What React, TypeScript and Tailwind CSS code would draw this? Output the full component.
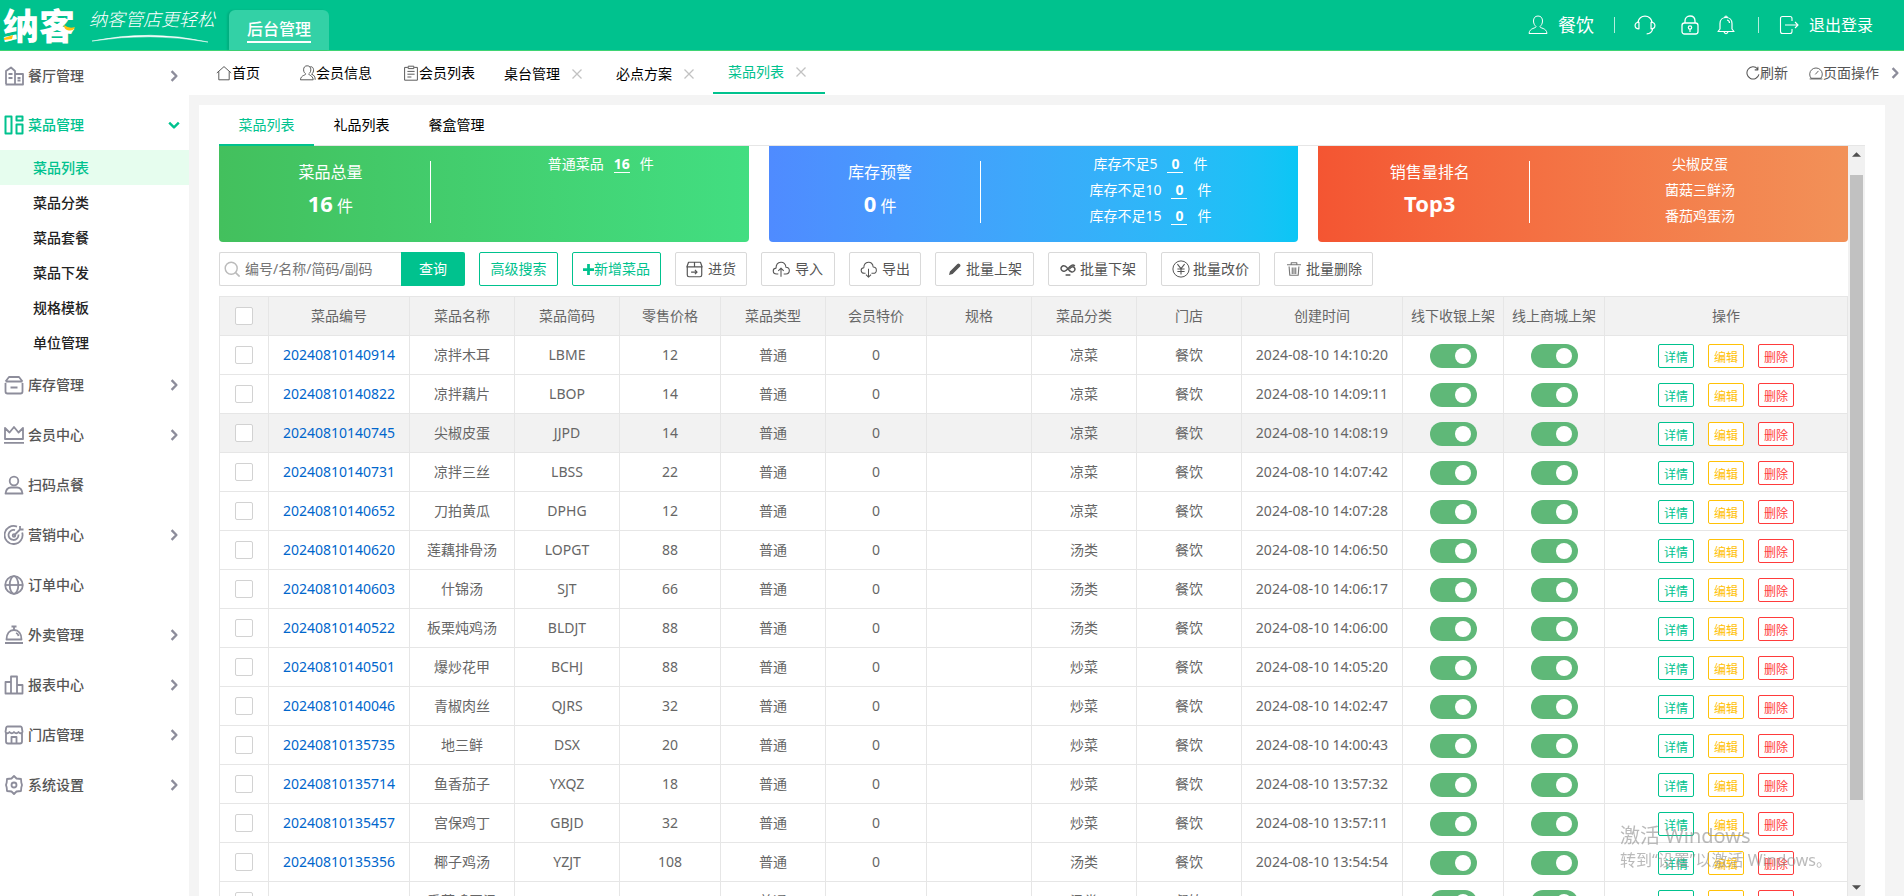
import React, { useState } from 'react';

interface IconProps {
  className?: string;
  children: React.ReactNode;
}

const Icon: React.FC<IconProps> = ({ className = 'size-5', children }) => (
  <svg viewBox="0 0 20 20" fill="none" stroke="currentColor" strokeWidth="1.8" strokeLinejoin="round" className={`shrink-0 ${className}`} aria-hidden="true">
    {children}
  </svg>
);

const MENU = [
  { name: '餐厅管理', arrow: true, icon: <><path d="M2 18V5l5-3.500L11 5v13M1.500 18.500h17.500V8h-8M4.500 8h4M4.500 12h4M13.500 12h3M13.500 14.500h3" /></> },
  {
    name: '菜品管理', arrow: true, icon: <><path d="M1.500 1.500h6v17h-6zM12.500 1.500h6v4h-6zM12.500 9.500h6v9h-6z" strokeWidth="2" /></>,
    children: ['菜品列表', '菜品分类', '菜品套餐', '菜品下发', '规格模板', '单位管理'],
  },
  { name: '库存管理', arrow: true, icon: <><path d="M1.500 6.500l3.500-4.500h10l3.500 4.500M1.500 8v8.500q0 2 2 2h13q2 0 2-2V8M1.500 6.500h17M6.500 12.500h7" /></> },
  { name: '会员中心', arrow: true, icon: <><path d="M1 3v11h18V3l-4.500 4.500L10 2 5.500 7.500zM0 17.800h20" /></> },
  { name: '扫码点餐', arrow: false, icon: <><circle cx="10" cy="6" r="4.300" /><path d="M1.500 18.500c.5-4 3-6 5.500-6h6c2.500 0 5 2 5.500 6z" /></> },
  { name: '营销中心', arrow: true, icon: <><path d="M18.200 7.500a9 9 0 1 1-5.200-5.800M14.500 9.500a5 5 0 1 1-3.500-4.300M10 10.500l7-7M16 1v3.500h3.500" /><circle cx="10" cy="10.500" r="1.300" /></> },
  { name: '订单中心', arrow: false, icon: <><circle cx="10" cy="10" r="8.800" /><path d="M1 10h18" /><ellipse cx="10" cy="10" rx="4.300" ry="8.800" /></> },
  { name: '外卖管理', arrow: true, icon: <><path d="M7.500 1.500h5M10 1.500v3M2.500 14.500c0-6 3-9.500 7.500-9.500s7.500 3.500 7.500 9.500zM1 18h18M12 8c1.500.5 2.300 1.600 2.600 3" /></> },
  { name: '报表中心', arrow: true, icon: <><path d="M1.500 18.500V7h5.500M7 18.500V1.500h6v17M13 10h5.500v8.500h-17V7" /></> },
  { name: '门店管理', arrow: true, icon: <><path d="M2 8v8.500q0 2 2 2h12q2 0 2-2V8M3.500 1.500h13q1 0 1.300 1L18.500 7q-2 2.500-4 0-2.200 2.500-4.500 0-2.200 2.500-4.500 0-2 2.500-4 0l.7-4.500q.3-1 1.300-1zM7.500 18.500V12h5v6.500" /></> },
  { name: '系统设置', arrow: true, icon: <><path d="M10 1l2.500 2.500 4.500.5.300 3.500L18 10l-.7 2.500-.3 3.500-4.500.5L10 19l-2.500-2.500L3 16l-.3-3.500L2 10l.7-2.500L3 4l4.500-.5z" /><circle cx="10" cy="10" r="2.500" /></> },
];

const DISHES = [
  ['20240810140914', '凉拌木耳', 'LBME', '12', '凉菜', '2024-08-10 14:10:20'],
  ['20240810140822', '凉拌藕片', 'LBOP', '14', '凉菜', '2024-08-10 14:09:11'],
  ['20240810140745', '尖椒皮蛋', 'JJPD', '14', '凉菜', '2024-08-10 14:08:19'],
  ['20240810140731', '凉拌三丝', 'LBSS', '22', '凉菜', '2024-08-10 14:07:42'],
  ['20240810140652', '刀拍黄瓜', 'DPHG', '12', '凉菜', '2024-08-10 14:07:28'],
  ['20240810140620', '莲藕排骨汤', 'LOPGT', '88', '汤类', '2024-08-10 14:06:50'],
  ['20240810140603', '什锦汤', 'SJT', '66', '汤类', '2024-08-10 14:06:17'],
  ['20240810140522', '板栗炖鸡汤', 'BLDJT', '88', '汤类', '2024-08-10 14:06:00'],
  ['20240810140501', '爆炒花甲', 'BCHJ', '88', '炒菜', '2024-08-10 14:05:20'],
  ['20240810140046', '青椒肉丝', 'QJRS', '32', '炒菜', '2024-08-10 14:02:47'],
  ['20240810135735', '地三鲜', 'DSX', '20', '炒菜', '2024-08-10 14:00:43'],
  ['20240810135714', '鱼香茄子', 'YXQZ', '18', '炒菜', '2024-08-10 13:57:32'],
  ['20240810135457', '宫保鸡丁', 'GBJD', '32', '炒菜', '2024-08-10 13:57:11'],
  ['20240810135356', '椰子鸡汤', 'YZJT', '108', '汤类', '2024-08-10 13:54:54'],
  ['20240810135329', '番茄鸡蛋汤', 'FQJDT', '18', '汤类', '2024-08-10 13:53:50'],
];

const HEADERS = ['菜品编号', '菜品名称', '菜品简码', '零售价格', '菜品类型', '会员特价', '规格', '菜品分类', '门店', '创建时间', '线下收银上架', '线上商城上架', '操作'];

const cell = 'border-r border-b border-[#e6e6e6] p-0 text-center font-normal whitespace-nowrap';
const checkbox = 'block mx-auto size-[18px] appearance-none rounded-xs border border-[#d2d2d2] bg-white checked:bg-[#5fb878]';

const Toggle: React.FC<{ label: string }> = ({ label }) => (
  <input
    type="checkbox"
    role="switch"
    defaultChecked
    aria-label={label}
    className="block mx-auto mt-[2px] h-6 w-[47px] appearance-none rounded-full bg-[#d2d2d2] p-1 before:block before:size-4 before:rounded-full before:bg-white checked:bg-[#5fb878] checked:pl-[25px]"
  />
);

const CloseIcon = () => (
  <Icon className="size-[10px] text-[#c2c2c2]"><path d="M1 1l18 18M19 1L1 19" strokeWidth="2.500" /></Icon>
);

const Header = () => (
  <header className="flex h-[51px] shrink-0 items-center border-b border-[#3fd474] bg-[#00c28e] text-white">
    <div className="relative ml-[3px] w-[73px] pt-1 text-4xl leading-[46px] font-black">
      纳客
      <svg viewBox="0 0 73 50" className="absolute inset-0 h-[50px] w-[73px]" aria-hidden="true">
        <path d="M1 38l9-3-1 4-8 1zM61 25q5 4 11 2-2 5-8 3-3-1-3-5z" fill="#ffc20e" />
      </svg>
    </div>
    <div className="relative ml-[13px] w-[130px] pb-3 text-lg italic leading-6 font-light whitespace-nowrap">
      纳客管店更轻松
      <svg viewBox="0 0 130 10" className="absolute bottom-0 left-0 w-full" aria-hidden="true">
        <path d="M3 8Q62-4 119 9 62-1 3 8z" fill="#fff" stroke="#fff" strokeWidth=".5" />
      </svg>
    </div>
    <a href="#admin" className="ml-[10px] h-10 w-[100px] self-end rounded-t-md bg-[#33d1a6] pt-[7px] text-center shadow-[-2px_0_2px_rgba(0,0,0,0.1)]">
      <span className="inline-block border-b-2 border-white text-base leading-6 font-medium">后台管理</span>
    </a>
    <div className="ml-auto flex items-center pr-[31px]">
      <Icon className="mr-[10px] size-5"><path d="M10 1c-3 0-4.500 2-4.500 5S7 10.500 8 11.500c.5 2-6.500 1-7 7h18c-.5-6-7.500-5-7-7 1-1 2.500-2.500 2.500-5.500S13 1 10 1z" strokeWidth="1" /></Icon>
      <span className="text-lg">餐饮</span>
      <span className="ml-5 h-4 w-px bg-white/70" />
      <button type="button" aria-label="客服" className="ml-[19px]"><Icon className="size-[22px]"><path d="M3.500 7.500C4.500 3.500 7 2 10 2s5.500 1.500 6.500 5.500M17 13.500c-.5 2.500-2 4.500-5.500 4.500M4.500 7.500v6C2 13.500 1 12.500 1 10.500s1-3 3.500-3zM15.500 7.500v6c2.500 0 3.500-1 3.500-3s-1-3-3.500-3z" strokeWidth="1.100" /></Icon></button>
      <button type="button" aria-label="锁屏" className="ml-6"><Icon><path d="M5 8V6c0-3 2-5 5-5s5 2 5 5v2" strokeWidth="1.300" /><rect x="2" y="8" width="16" height="11" rx="2.500" strokeWidth="1.300" /><circle cx="10" cy="12.500" r="1.700" strokeWidth="1.200" /><path d="M10 14v3" strokeWidth="1.200" /></Icon></button>
      <button type="button" aria-label="消息" className="ml-4"><Icon><path d="M2 16.500l2-2.500V8.500C4 5 6.500 2.500 10 2.500S16 5 16 8.500V14l2 2.500zM8.500 2.500Q10-.5 11.500 2.500M8 17q2 3.500 4 0M11 5q2.500.5 2.500 3" strokeWidth="1.200" /></Icon></button>
      <span className="ml-[22px] h-4 w-px bg-white/70" />
      <a href="#logout" className="ml-5 flex items-center gap-[10px] text-base">
        <Icon><path d="M13 6V3.500Q13 1.500 11 1.500H3.500Q1.500 1.500 1.500 3.500v13q0 2 2 2H11q2 0 2-2V14M6 10h13M16 7l3 3-3 3" strokeWidth="1.100" /></Icon>
        退出登录
      </a>
    </div>
  </header>
);

const Sidebar = () => (
  <aside className="w-[189px] shrink-0 bg-white">
    <nav>
      {MENU.map((item, n) => (
        <div key={item.name}>
          <a href="#menu" className={`flex items-center pr-[9px] pl-1 text-sm font-medium ${n === 0 ? 'h-[49px]' : 'h-[50px]'} ${item.children ? 'text-[#00c28e]' : 'text-[#555]'}`}>
            <span className={item.children ? 'text-[#00c28e]' : 'text-[#8d8d9b]'}><Icon>{item.icon}</Icon></span>
            <span className="ml-1 flex-1">{item.name}</span>
            {item.arrow && (
              <Icon className={`size-3 ${item.children ? 'rotate-90' : 'text-[#8d8d9b]'}`}><path d="M6 2l8 8-8 8" strokeWidth="4" /></Icon>
            )}
          </a>
          {item.children?.map((sub, i) => (
            <a key={sub} href="#sub" className={`block h-[35px] pl-[33px] text-sm leading-[35px] font-medium ${i === 0 ? 'bg-[#e6fdee] text-[#00c28e]' : 'text-[#222]'}`}>{sub}</a>
          ))}
        </div>
      ))}
    </nav>
  </aside>
);

const TabBar = () => (
  <div className="flex h-11 shrink-0 items-center bg-white text-sm text-black">
    <a href="#home" className="flex w-[84px] items-center pl-[27px]">
      <Icon className="size-4 text-[#555]"><path d="M1 10l9-8 9 8M3.500 8v10.500h13V8" strokeWidth="1.200" /></Icon>首页
    </a>
    <a href="#member" className="flex w-[103px] items-center pl-[27px]">
      <Icon className="size-4 text-[#555]"><path d="M9 1C6 1 4.500 3 4.500 6s1.500 4 2.500 5c.5 2-6 1.500-6.500 7.500h16c-.5-6-6-5.500-5.500-7.500 1-1 2.500-2 2.500-5S12 1 9 1zM13 2c5 0 5 7 1.500 9.500 3 1 4.500 3 4.500 7" strokeWidth="1.200" /></Icon>会员信息
    </a>
    <a href="#members" className="flex w-[113px] items-center pl-[27px]">
      <Icon className="size-4 text-[#555]"><path d="M6 3H2v16h16V3h-4M6.500 1.500h7v3h-7zM5.500 8h9M5.500 11.500h9M5.500 15h5" strokeWidth="1.200" /></Icon>会员列表
    </a>
    {['桌台管理', '必点方案', '菜品列表'].map((name) => (
      <div key={name} className={`flex h-[43px] w-28 items-center gap-3 self-start border-b-2 pl-[15px] ${name === '菜品列表' ? 'border-[#00c28e] text-[#00c28e]' : 'border-transparent pt-[4px]'}`}>
        <a href="#tab">{name}</a>
        <button type="button" aria-label={`关闭${name}`}><CloseIcon /></button>
      </div>
    ))}
    <div className="ml-auto flex items-center pr-[3px] text-[#555]">
      <button type="button" className="flex items-center">
        <Icon className="size-[14px]"><path d="M16.500 4A8.700 8.700 0 1 0 18.500 12M17 1v4.500h-4.500" strokeWidth="1.500" /></Icon>刷新
      </button>
      <button type="button" className="ml-[21px] flex items-center">
        <Icon className="size-[14px]"><path d="M3 17.500A9 9 0 1 1 17 17.500zM9 12l4.500-5M1 18.500h18" strokeWidth="1.300" /></Icon>页面操作
      </button>
      <Icon className="ml-[10px] size-3 text-[#8d8d9b]"><path d="M6 2l8 8-8 8" strokeWidth="4" /></Icon>
    </div>
  </div>
);

interface StatCardProps {
  color: string;
  title: string;
  total: React.ReactNode;
  children: React.ReactNode;
}

const StatCard: React.FC<StatCardProps> = ({ color, title, total, children }) => (
  <div className={`flex h-24 flex-1 items-start rounded-b bg-linear-to-r pt-[15px] text-white ${color}`}>
    <div className="h-[62px] w-2/5 border-r border-white pl-3 text-center">
      <div className="-mt-px text-base leading-6">{title}</div>
      <div className="mt-[7px] text-base leading-6">{total}</div>
    </div>
    <div className="-mt-[10px] flex-1 pl-[22px] text-center text-sm leading-[26px]">{children}</div>
  </div>
);

const StatLine: React.FC<{ label: string; value: string }> = ({ label, value }) => (
  <div>
    {label}
    <a href="#stock" className={`mx-[10px] inline-block border-b border-white leading-4 font-bold ${value === '0' ? 'px-1' : ''}`}>{value}</a>
    件
  </div>
);

const plain = 'flex h-[34px] items-center rounded-xs border border-[#d9d9d9] bg-white text-[#555]';

const Toolbar = () => (
  <div className="mt-[10px] flex gap-[14px] text-sm">
    <form className="flex" onSubmit={(e) => e.preventDefault()}>
      <label className="flex h-[34px] w-[182px] items-center rounded-l-xs border border-r-0 border-[#d9d9d9] pl-1">
        <Icon className="size-4 text-[#bbb]"><circle cx="9" cy="9" r="7.500" strokeWidth="1.800" /><path d="M14.500 14.500l5 5" strokeWidth="2" /></Icon>
        <input type="text" aria-label="搜索菜品" placeholder="编号/名称/简码/副码" className="ml-[5px] w-[140px] outline-none placeholder:text-[#757575]" />
      </label>
      <button type="submit" className="w-16 rounded-r-xs bg-[#00c28e] text-white">查询</button>
    </form>
    <button type="button" className="h-[34px] w-[79px] rounded-xs border border-[#00c28e] text-[#00c28e]">高级搜索</button>
    <button type="button" className="flex h-[34px] w-[89px] items-center justify-center rounded-xs border border-[#00c28e] text-[#00c28e]">
      <Icon className="size-[11px]"><path d="M10 0v20M0 10h20" strokeWidth="5" /></Icon>新增菜品
    </button>
    <button type="button" className={`${plain} w-[72px] pl-[10px] gap-[5px]`}>
      <Icon className="size-[17px]"><path d="M1 7l2-5.500h14L19 7zM1.500 7v9.500q0 2 2 2h13q2 0 2-2V7M10 1.500V7M6 13h7M10.500 10.500L13 13l-2.500 2.500" strokeWidth="1.400" /></Icon>进货
    </button>
    <button type="button" className={`${plain} w-[74px] pl-[10px] gap-[5px]`}>
      <Icon className="size-[18px]"><path d="M7 15.500H5C.5 15.500 0 9.500 4.500 9 4.500 1 15 0 15.500 8c5 0 5 7.500 0 7.500h-2.500M10 18.500V9M7 12l3-3 3 3" strokeWidth="1.200" /></Icon>导入
    </button>
    <button type="button" className={`${plain} w-[72px] pl-[10px] gap-[5px]`}>
      <Icon className="size-[17px]"><path d="M6.500 14.500H5C.5 14.500 0 8.500 4.500 8 4.500 0 15-1 15.500 7c5 0 5 7.500 0 7.500h-2M10 9v10M7 16l3 3 3-3" strokeWidth="1.200" /></Icon>导出
    </button>
    <button type="button" className={`${plain} w-[99px] pl-[13px] gap-[5px]`}>
      <Icon className="size-3"><path d="M0 20l1.500-6L14 1.500q2-1.500 3.500 0l1 1q1.500 1.500 0 3.500L6 18.500z" fill="currentColor" stroke="none" /></Icon>批量上架
    </button>
    <button type="button" className={`${plain} w-[99px] pl-[11px] gap-1`}>
      <Icon className="size-4"><path d="M18.500 6.500C16 3 12 7 10 9.500S4 14.500 2 11.500 3 4.500 6.500 6.500 11 12.500 14 13.500 20 11 18 8.500 13 8 12 10M7 17.500h6" strokeWidth="1.800" /></Icon>批量下架
    </button>
    <button type="button" className={`${plain} w-[99px] pl-[10px] gap-[3px]`}>
      <Icon className="size-[18px]"><circle cx="10" cy="10" r="9" strokeWidth="1.100" /><path d="M6 4.500l4 5 4-5M10 9.500v6.500M6 10h8M6 12.800h8" strokeWidth="1.200" /></Icon>批量改价
    </button>
    <button type="button" className={`${plain} w-[99px] pl-[12px] gap-[5px]`}>
      <Icon className="size-[14px] text-[#777]"><path d="M0 4h20M6 3.500V1h8v2.500M3 6.500l1 12.500h12l1-12.500M7.500 8v9M10 8v9M12.500 8v9" strokeWidth="1.600" /></Icon>批量删除
    </button>
  </div>
);

const action = 'h-6 w-9 rounded-xs border bg-white pt-[3px] text-xs leading-4';

const DishTable = () => (
  <table className="mt-[10px] w-full table-fixed border-separate border-spacing-0 border-t border-l border-[#e6e6e6] text-sm text-[#666]">
    <colgroup>
      <col className="w-[49px]" />
      <col className="w-[141px]" />
      <col className="w-[105px]" />
      <col className="w-[105px]" />
      <col className="w-[101px]" />
      <col className="w-[105px]" />
      <col className="w-[101px]" />
      <col className="w-[105px]" />
      <col className="w-[105px]" />
      <col className="w-[105px]" />
      <col className="w-[161px]" />
      <col className="w-[101px]" />
      <col className="w-[101px]" />
      <col />
    </colgroup>
    <thead>
      <tr className="h-[39px] bg-[#f2f2f2]">
        <th className={cell}><input type="checkbox" aria-label="全选" className={checkbox} /></th>
        {HEADERS.map((h) => <th key={h} className={cell}>{h}</th>)}
      </tr>
    </thead>
    <tbody>
      {DISHES.map(([id, name, code, price, kind, time], i) => (
        <tr key={id} className={`h-[39px] ${i === 2 ? 'bg-[#f2f2f2]' : 'bg-white'}`}>
          <td className={cell}><input type="checkbox" aria-label={`选择${name}`} className={checkbox} /></td>
          <td className={cell}><a href="#dish" className="text-[#0066cc]">{id}</a></td>
          <td className={cell}>{name}</td>
          <td className={cell}>{code}</td>
          <td className={cell}>{price}</td>
          <td className={cell}>普通</td>
          <td className={cell}>0</td>
          <td className={cell}></td>
          <td className={cell}>{kind}</td>
          <td className={cell}>餐饮</td>
          <td className={cell}>{time}</td>
          <td className={cell}><Toggle label={`${name}线下收银上架`} /></td>
          <td className={cell}><Toggle label={`${name}线上商城上架`} /></td>
          <td className={cell}>
            <div className="mt-[2px] flex justify-center gap-[14px]">
              <button type="button" className={`${action} border-[#00c28e] text-[#00c28e]`}>详情</button>
              <button type="button" className={`${action} border-[#ffc107] text-[#ffc107]`}>编辑</button>
              <button type="button" className={`${action} border-[#ff3b3b] text-[#ff3b3b]`}>删除</button>
            </div>
          </td>
        </tr>
      ))}
    </tbody>
  </table>
);

const App = () => {
  const [tab, setTab] = useState('菜品列表');

  return (
    <div className="flex h-screen flex-col overflow-hidden bg-[#f4f4f4] font-['Noto_Sans','Noto_Sans_CJK_SC',sans-serif]">
      <Header />
      <div className="flex min-h-0 flex-1">
        <Sidebar />
        <div className="flex min-w-0 flex-1 flex-col">
          <TabBar />
          <main className="mt-[10px] mr-[19px] ml-[10px] flex min-h-0 flex-1 flex-col bg-white px-5">
            <div className="flex h-[41px] shrink-0 border-b border-[#e6e6e6] text-sm">
              {['菜品列表', '礼品列表', '餐盒管理'].map((name) => (
                <button
                  key={name}
                  type="button"
                  onClick={() => setTab(name)}
                  className={`-mb-px w-[95px] border-b-2 ${tab === name ? 'border-[#00c28e] text-[#00c28e]' : 'border-transparent text-black'}`}
                >
                  {name}
                </button>
              ))}
            </div>
            <div className="flex min-h-0 flex-1">
              <div className="min-w-0 flex-1 overflow-hidden">
                <div className="flex gap-5">
                  <StatCard color="from-[#43c05d] to-[#42de81]" title="菜品总量" total={<><b className="text-[22px] leading-6">16</b> 件</>}>
                    <StatLine label="普通菜品" value="16" />
                  </StatCard>
                  <StatCard color="from-[#4f8bff] to-[#0ac6f5]" title="库存预警" total={<><b className="text-[22px] leading-6">0</b> 件</>}>
                    <StatLine label="库存不足5" value="0" />
                    <StatLine label="库存不足10" value="0" />
                    <StatLine label="库存不足15" value="0" />
                  </StatCard>
                  <StatCard color="from-[#f45532] to-[#f29158]" title="销售量排名" total={<b className="text-[22px] leading-6">Top3</b>}>
                    <div>尖椒皮蛋</div>
                    <div>菌菇三鲜汤</div>
                    <div>番茄鸡蛋汤</div>
                  </StatCard>
                </div>
                <Toolbar />
                <DishTable />
              </div>
              <div className="flex w-[17px] shrink-0 flex-col items-center bg-[#f1f1f1] text-[#505050]" aria-hidden="true">
                <Icon className="my-1 size-[9px]"><path d="M0 15L10 5l10 10z" fill="currentColor" stroke="none" /></Icon>
                <div className="flex w-full flex-1 flex-col px-[2px] pt-3 pb-[79px]">
                  <div className="flex-1 bg-[#c1c1c1]" />
                </div>
                <Icon className="my-1 size-[9px]"><path d="M0 5l10 10L20 5z" fill="currentColor" stroke="none" /></Icon>
              </div>
            </div>
          </main>
        </div>
      </div>
      <div className="pointer-events-none fixed right-[88px] bottom-[26px] w-[196px] whitespace-nowrap text-[#8c8c8c]/60">
        <div className="text-xl leading-7">激活 Windows</div>
        <div className="text-base leading-5">转到“设置”以激活 Windows。</div>
      </div>
    </div>
  );
};

export default App;
